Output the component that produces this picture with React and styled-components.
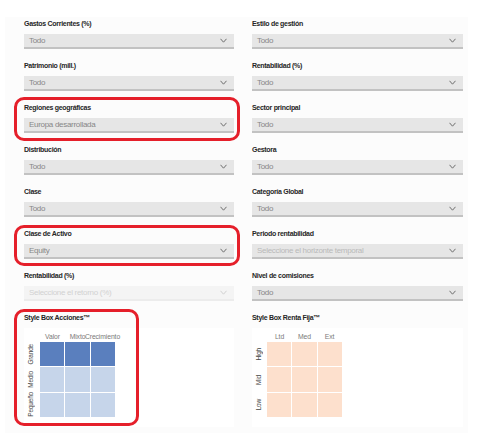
import React from "react";
import styled, { createGlobalStyle, css } from "styled-components";

const Global = createGlobalStyle`
  html, body { margin: 0; padding: 0; background: #ffffff; }
  body { font-family: "Liberation Sans", Arial, sans-serif; }
`;

const Panel = styled.div`
  box-sizing: border-box;
  width: 463px;
  height: 416px;
  margin: 17px 0 0 5px;
  background: #fcfcfc;
  padding: 1px 5px 0 19px;
  display: grid;
  grid-template-columns: 210px 211px;
  column-gap: 18px;
  align-items: start;
`;

const Column = styled.div`
  display: flex;
  flex-direction: column;
`;

const Field = styled.div`
  position: relative;
  margin-bottom: 11px;
  ${(p) =>
    p.$highlight &&
    css`
      &::after {
        content: "";
        position: absolute;
        left: -10px;
        right: -6px;
        top: ${p.$top}px;
        bottom: ${p.$bottom}px;
        border: 3.5px solid #e51f2a;
        border-radius: 10px;
        pointer-events: none;
      }
    `}
`;

const Label = styled.div`
  height: 12px;
  line-height: 12px;
  font-size: 7px;
  font-weight: 700;
  letter-spacing: -0.3px;
  color: #262626;
  margin-bottom: 4px;
  white-space: nowrap;
`;

const Select = styled.div`
  box-sizing: border-box;
  height: 15px;
  display: flex;
  align-items: center;
  justify-content: space-between;
  padding: 0 7px 0 5px;
  background: ${(p) => (p.$disabled ? "#f4f4f4" : "#e6e6e6")};
  border-bottom: 2px solid ${(p) => (p.$disabled ? "#ececec" : "#c2c2c2")};
`;

const Value = styled.span`
  font-size: 8px;
  letter-spacing: -0.3px;
  line-height: 13px;
  color: ${(p) => (p.$disabled ? "#d2d2d2" : p.$placeholder ? "#b9b9b9" : "#868686")};
  white-space: nowrap;
`;

const Chevron = ({ light }) => (
  <svg width="7" height="5" viewBox="0 0 7 5">
    <polyline
      points="0.5,0.8 3.5,4.2 6.5,0.8"
      fill="none"
      stroke={light ? "#d0d0d0" : "#6e6e6e"}
      strokeWidth="1"
    />
  </svg>
);

const BoxSection = styled.div`
  position: relative;
  ${(p) =>
    p.$highlight &&
    css`
      &::after {
        content: "";
        position: absolute;
        left: -10px;
        top: -3px;
        width: 125px;
        height: 117px;
        box-sizing: border-box;
        border: 3.5px solid #e51f2a;
        border-radius: 10px;
        pointer-events: none;
      }
    `}
`;

const WhiteBox = styled.div`
  height: 99px;
  background: #ffffff;
  display: grid;
  grid-template-columns: ${(p) => p.$labelW}px 75px;
  grid-template-rows: 14px 75px;
  align-content: start;
`;

const Headers = styled.div`
  grid-column: 2;
  display: grid;
  grid-template-columns: repeat(3, 25px);
  align-items: center;
`;

const Head = styled.span`
  font-size: 6.8px;
  letter-spacing: -0.1px;
  color: #7a7a7a;
  white-space: nowrap;
  display: flex;
  justify-content: center;
  line-height: 10px;
  padding-top: 3px;
`;

const RowLabels = styled.div`
  grid-column: 1;
  display: grid;
  grid-template-rows: repeat(3, 1fr);
  justify-items: center;
  align-items: center;
`;

const RowLabel = styled.span`
  writing-mode: vertical-rl;
  transform: rotate(180deg);
  font-size: 6.5px;
  letter-spacing: -0.2px;
  color: #444444;
  white-space: nowrap;
  line-height: 10px;
  padding-left: 2px;
`;

const Cells = styled.div`
  grid-column: 2;
  display: grid;
  grid-template-columns: repeat(3, 1fr);
  grid-template-rows: repeat(3, 1fr);
  gap: 1px;
  background: #ffffff;
`;

const Cell = styled.div`
  background: ${(p) => p.$color};
`;

const leftFields = [
  { label: "Gastos Corrientes (%)", value: "Todo" },
  { label: "Patrimonio (mill.)", value: "Todo" },
  { label: "Regiones geográficas", value: "Europa desarrollada", highlight: true, top: -5, bottom: -8 },
  { label: "Distribución", value: "Todo" },
  { label: "Clase", value: "Todo" },
  { label: "Clase de Activo", value: "Equity", highlight: true, top: -3, bottom: -7 },
  { label: "Rentabilidad (%)", value: "Seleccione el retorno (%)", disabled: true },
];

const rightFields = [
  { label: "Estilo de gestión", value: "Todo" },
  { label: "Rentabilidad (%)", value: "Todo" },
  { label: "Sector principal", value: "Todo" },
  { label: "Gestora", value: "Todo" },
  { label: "Categoría Global", value: "Todo" },
  { label: "Periodo rentabilidad", value: "Seleccione el horizonte temporal", placeholder: true },
  { label: "Nivel de comisiones", value: "Todo" },
];

const FieldItem = ({ f }) => (
  <Field $highlight={f.highlight} $top={f.top} $bottom={f.bottom}>
    <Label>{f.label}</Label>
    <Select $disabled={f.disabled}>
      <Value $disabled={f.disabled} $placeholder={f.placeholder}>
        {f.value}
      </Value>
      <Chevron light={f.disabled} />
    </Select>
  </Field>
);

const StyleBox = ({ title, cols, rows, colors, labelW, highlight }) => (
  <BoxSection $highlight={highlight}>
    <Label>{title}</Label>
    <WhiteBox $labelW={labelW}>
      <Headers>
        {cols.map((c) => (
          <Head key={c}>{c}</Head>
        ))}
      </Headers>
      <RowLabels>
        {rows.map((r) => (
          <RowLabel key={r}>{r}</RowLabel>
        ))}
      </RowLabels>
      <Cells>
        {rows.map((r, ri) =>
          cols.map((c) => <Cell key={r + c} $color={colors[ri]} />)
        )}
      </Cells>
    </WhiteBox>
  </BoxSection>
);

export default function App() {
  return (
    <>
      <Global />
      <Panel>
        <Column>
          {leftFields.map((f) => (
            <FieldItem key={f.label} f={f} />
          ))}
          <StyleBox
            title="Style Box Acciones™"
            cols={["Valor", "Mixto", "Crecimiento"]}
            rows={["Grande", "Medio", "Pequeño"]}
            colors={["#5a7fbe", "#c6d5ea", "#c6d5ea"]}
            labelW={16}
            highlight
          />
        </Column>
        <Column>
          {rightFields.map((f) => (
            <FieldItem key={f.label} f={f} />
          ))}
          <StyleBox
            title="Style Box Renta Fija™"
            cols={["Ltd", "Med", "Ext"]}
            rows={["High", "Mid", "Low"]}
            colors={["#fde0cd", "#fde0cd", "#fde0cd"]}
            labelW={15}
          />
        </Column>
      </Panel>
    </>
  );
}
